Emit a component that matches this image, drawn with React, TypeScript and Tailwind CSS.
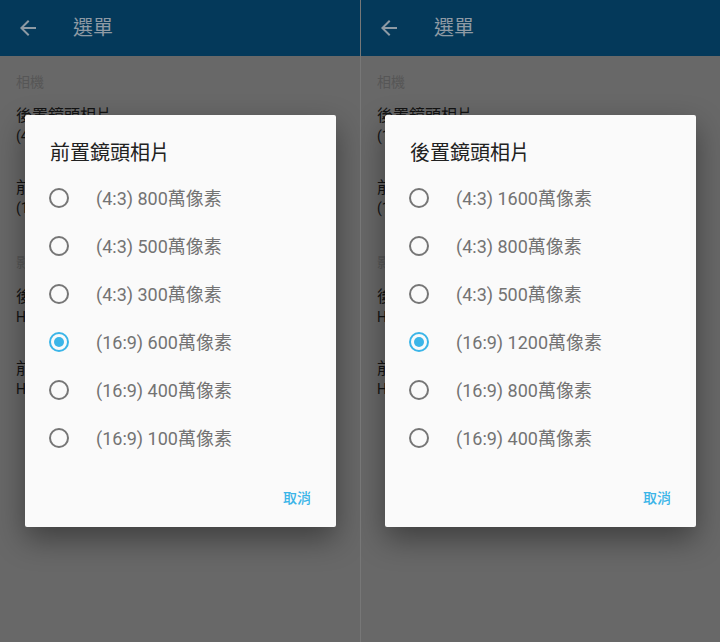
import React from "react";

const FONT = { fontFamily: 'Roboto, "Noto Sans CJK TC", "Noto Sans CJK SC", sans-serif' };

type Phone = {
  title: string;
  options: string[];
  selected: number;
  bg: { t: string; s: string }[];
};

const phones: Phone[] = [
  {
    title: "前置鏡頭相片",
    options: [
      "(4:3) 800萬像素",
      "(4:3) 500萬像素",
      "(4:3) 300萬像素",
      "(16:9) 600萬像素",
      "(16:9) 400萬像素",
      "(16:9) 100萬像素",
    ],
    selected: 3,
    bg: [
      { t: "後置鏡頭相片", s: "(4:3) 1600萬像素" },
      { t: "前置鏡頭相片", s: "(16:9) 600萬像素" },
      { t: "後置鏡頭影片", s: "HD 1080p" },
      { t: "前置鏡頭影片", s: "HD 720p" },
    ],
  },
  {
    title: "後置鏡頭相片",
    options: [
      "(4:3) 1600萬像素",
      "(4:3) 800萬像素",
      "(4:3) 500萬像素",
      "(16:9) 1200萬像素",
      "(16:9) 800萬像素",
      "(16:9) 400萬像素",
    ],
    selected: 3,
    bg: [
      { t: "後置鏡頭相片", s: "(16:9) 1200萬像素" },
      { t: "前置鏡頭相片", s: "(16:9) 600萬像素" },
      { t: "後置鏡頭影片", s: "HD 1080p" },
      { t: "前置鏡頭影片", s: "HD 720p" },
    ],
  },
];

function Item({ t, s }: { t: string; s: string }) {
  return (
    <div className="h-[72px] pt-[15px] px-4">
      <div className="text-base leading-[20px] text-[#131313]">{t}</div>
      <div className="text-sm leading-[21px] text-[#131313]">{s}</div>
    </div>
  );
}

function Radio({ on }: { on: boolean }) {
  return (
    <div
      className={
        "w-5 h-5 rounded-full border-2 flex items-center justify-center shrink-0 " +
        (on ? "border-[#3bb5e8]" : "border-[#767676]")
      }
    >
      {on && <div className="w-[10px] h-[10px] rounded-full bg-[#3bb5e8]" />}
    </div>
  );
}

function PhoneView({ p, border }: { p: Phone; border: boolean }) {
  return (
    <div
      className={
        "relative w-[360px] h-[642px] bg-[#686868] overflow-hidden " +
        (border ? "border-l border-[#777777]" : "")
      }
    >
      <div className="h-14 bg-[#04395a] flex items-center">
        <div className="w-14 pl-4 flex items-center">
          <svg width="24" height="24" viewBox="0 0 24 24">
            <path
              d="M20 11H7.83l5.59-5.59L12 4l-8 8 8 8 1.41-1.41L7.83 13H20v-2z"
              fill="#8e9aa4"
            />
          </svg>
        </div>
        <div className="pl-[17px] text-[20px] text-[#8e9aa4]">選單</div>
      </div>
      <div className="h-[35px] pt-4 px-4 text-sm leading-[20px] text-[#565656]">相機</div>
      <Item {...p.bg[0]} />
      <Item {...p.bg[1]} />
      <div className="h-[37px] pt-[17px] px-4 text-sm leading-[20px] text-[#565656]">影片</div>
      <Item {...p.bg[2]} />
      <Item {...p.bg[3]} />

      <div
        className={
          "absolute top-[115px] w-[311px] h-[412px] bg-[#fafafa] rounded-[2px] shadow-[0_12px_30px_rgba(0,0,0,0.4)] flex flex-col " +
          (border ? "left-[24px]" : "left-[25px]")
        }
      >
        <div className="pt-6 pl-[25px] text-[20px] leading-[28px] text-[#212121]">{p.title}</div>
        <div className="mt-[7px] flex flex-col">
          {p.options.map((o, i) => (
            <div key={i} className="h-12 flex items-center pl-6">
              <Radio on={i === p.selected} />
              <div className="pl-[27px] text-[18px] text-[#737373]">{o}</div>
            </div>
          ))}
        </div>
        <div className="mt-[18px] h-9 flex items-center justify-end pr-[25px]">
          <span className="text-sm font-medium text-[#3bb5e8]">取消</span>
        </div>
      </div>
    </div>
  );
}

export default function App() {
  return (
    <div className="flex w-[720px] h-[642px]" style={FONT}>
      <PhoneView p={phones[0]} border={false} />
      <PhoneView p={phones[1]} border={true} />
    </div>
  );
}
